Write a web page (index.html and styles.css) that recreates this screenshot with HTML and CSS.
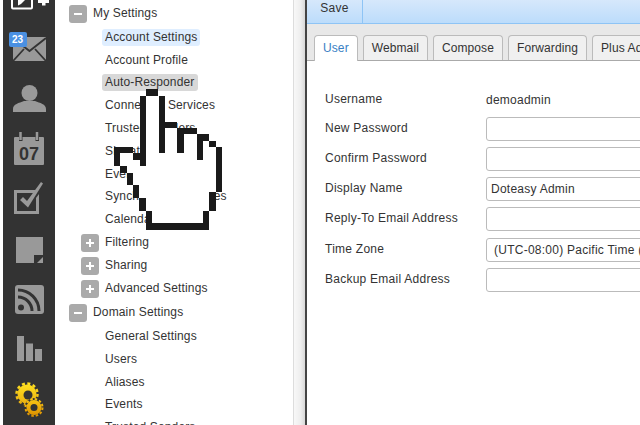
FILE: index.html
```html
<!DOCTYPE html>
<html lang="en">
<head>
<meta charset="utf-8">
<title>Settings</title>
<link rel="stylesheet" href="styles.css">
</head>
<body>
<div class="app">
  <nav class="rail">
    <div class="rail-top">
      <svg width="52" height="10" viewBox="0 0 52 10"><path d="M9 0v7.500a1 1 0 0 0 1 1h18a1 1 0 0 0 1-1V0" fill="none" stroke="#fff" stroke-width="2"/><path d="M15 0h7l-4 4-3 1.500z" fill="#fff"/><path d="M35 0h11v3h-3.500v2.500H39V3h-4z" fill="#fff"/></svg>
    </div>
    <div class="rail-item i-mail">
      <svg width="33" height="24" viewBox="0 0 33 24"><rect width="33" height="24" fill="#999"/><path d="M0 1l16.500 13L33 1" fill="none" stroke="#333" stroke-width="1.800"/><path d="M0 24l11-12M33 24L22 12" fill="none" stroke="#333" stroke-width="1.800"/></svg>
      <span class="badge">23</span>
    </div>
    <div class="rail-item i-person">
      <svg width="33" height="27" viewBox="0 0 33 27"><circle cx="16.500" cy="8" r="8" fill="#999"/><path d="M0 27v-3c0-5 6-6 11-8h11c5 2 11 3 11 8v3z" fill="#999"/></svg>
    </div>
    <div class="rail-item i-cal">
      <svg width="30" height="33" viewBox="0 0 30 33"><path d="M1 5h4v4h3.500V5h13v4H25V5h4a1 1 0 0 1 1 1v26a1 1 0 0 1-1 1H1a1 1 0 0 1-1-1V6a1 1 0 0 1 1-1z" fill="#999"/><path d="M6.500 0v8M23 0v8" fill="none" stroke="#999" stroke-width="2.500"/><text x="15" y="28" text-anchor="middle" class="cal">07</text></svg>
    </div>
    <div class="rail-item i-check">
      <svg width="30" height="32" viewBox="0 0 30 32"><path d="M0 8h22v3H3v18h19V16l3-4v20H0z" fill="#999"/><path d="M6 18l3-3 4 4L27 0l2 1.500-15 24z" fill="#999"/></svg>
    </div>
    <div class="rail-item i-note">
      <svg width="27" height="26" viewBox="0 0 27 26"><path d="M0 0h27v18h-9v8H0z" fill="#999"/><path d="M27 20v6h-6z" fill="#999"/></svg>
    </div>
    <div class="rail-item i-rss">
      <svg width="29" height="29" viewBox="0 0 29 29"><rect width="29" height="29" rx="3" fill="#999"/><circle cx="6" cy="22.500" r="3" fill="#333"/><path d="M3 12a14 14 0 0 1 14 14" fill="none" stroke="#333" stroke-width="3"/><path d="M3 5a21 21 0 0 1 21 21" fill="none" stroke="#333" stroke-width="3"/></svg>
    </div>
    <div class="rail-item i-bars">
      <svg width="25" height="25" viewBox="0 0 25 25"><path d="M0 0h7v25H0zM9 7.500h7V25H9zM18 13h7v12h-7z" fill="#999"/></svg>
    </div>
    <div class="rail-item">
      <svg width="30" height="36" viewBox="0 0 30 36"><defs><linearGradient id="ga" x1="0" y1="0" x2="0" y2="1"><stop offset="0" stop-color="#ffdf20"/><stop offset="1" stop-color="#eab010"/></linearGradient><linearGradient id="gb" x1="0" y1="0" x2="0" y2="1"><stop offset="0" stop-color="#f8c414"/><stop offset="1" stop-color="#dd9200"/></linearGradient></defs><circle cx="13" cy="12" r="9.500" fill="url(#ga)"/><circle cx="13" cy="12" r="10.500" fill="none" stroke="url(#ga)" stroke-width="2.500" stroke-dasharray="3 2.500"/><circle cx="14" cy="13" r="4.500" fill="#333"/><circle cx="20" cy="25.500" r="9.500" fill="#333"/><circle cx="20" cy="25.500" r="7.500" fill="url(#gb)"/><circle cx="20" cy="25.500" r="8.500" fill="none" stroke="url(#gb)" stroke-width="2" stroke-dasharray="2.500 2"/><circle cx="20" cy="25.500" r="3.500" fill="#333"/></svg>
    </div>
  </nav>
  <aside class="tree">
    <div class="node top"><span class="tog minus"></span><span class="lab">My Settings</span></div>
    <div class="leaf"><span class="lab sel">Account Settings</span></div>
    <div class="leaf"><span class="lab">Account Profile</span></div>
    <div class="leaf"><span class="lab hov">Auto-Responder</span></div>
    <div class="leaf"><span class="lab">Connected Services</span></div>
    <div class="leaf"><span class="lab">Trusted Senders</span></div>
    <div class="leaf"><span class="lab">Signatures</span></div>
    <div class="leaf"><span class="lab">Events</span></div>
    <div class="leaf"><span class="lab">Synchronized Devices</span></div>
    <div class="leaf"><span class="lab">Calendars</span></div>
    <div class="node sub"><span class="tog plus"></span><span class="lab">Filtering</span></div>
    <div class="node sub"><span class="tog plus"></span><span class="lab">Sharing</span></div>
    <div class="node sub"><span class="tog plus"></span><span class="lab">Advanced Settings</span></div>
    <div class="node top"><span class="tog minus"></span><span class="lab">Domain Settings</span></div>
    <div class="leaf"><span class="lab">General Settings</span></div>
    <div class="leaf"><span class="lab">Users</span></div>
    <div class="leaf"><span class="lab">Aliases</span></div>
    <div class="leaf"><span class="lab">Events</span></div>
    <div class="leaf"><span class="lab">Trusted Senders</span></div>
  </aside>
  <div class="gutter"></div>
  <main class="panel">
    <div class="toolbar"><button class="save">Save</button></div>
    <div class="tabs">
      <span class="tab active">User</span>
      <span class="tab">Webmail</span>
      <span class="tab">Compose</span>
      <span class="tab">Forwarding</span>
      <span class="tab">Plus Addressing</span>
    </div>
    <div class="form">
      <div class="row static"><label>Username</label><span class="val">demoadmin</span></div>
      <div class="row"><label>New Password</label><span class="input"></span></div>
      <div class="row"><label>Confirm Password</label><span class="input"></span></div>
      <div class="row"><label>Display Name</label><span class="input">Doteasy Admin</span></div>
      <div class="row"><label>Reply-To Email Address</label><span class="input"></span></div>
      <div class="row tz"><label>Time Zone</label><span class="input select">(UTC-08:00) Pacific Time (US &amp; Canada)</span></div>
      <div class="row"><label>Backup Email Address</label><span class="input"></span></div>
    </div>
  </main>
</div>
<svg class="hand" width="110" height="143" viewBox="114 89 110 143" shape-rendering="crispEdges">
  <path d="M146 89h12v7h7v26h12v6h20v6h12v7h7v6h6v45h-6v19h-7v19h-63v-19h-7v-13h-6v-13h-6v-12h-7v-7h-6v-19h19v7h7V96h6z" fill="#fff"/>
  <path d="M146 89h12v7h-12zM140 96h6v70h-6zM159 96h6v57h-6zM165 122h12v6h-12zM177 128h7v25h-7zM184 128h13v6h-13zM197 134h6v26h-6zM203 134h6v7h-6zM209 141h7v6h-7zM216 147h6v45h-6zM209 192h7v19h-7zM203 211h6v12h-6zM146 223h63v7h-63zM146 211h6v12h-6zM139 198h7v13h-7zM133 185h6v13h-6zM127 173h6v12h-6zM120 166h7v7h-7zM114 147h6v19h-6zM120 147h13v6h-13zM133 153h7v7h-7z" fill="#1a1a1a"/>
</svg>
</body>
</html>
```
FILE: styles.css
```css
* { box-sizing: border-box; }
html, body { margin: 0; height: 100%; overflow: hidden; background: #fff; }
body { font-family: "Liberation Sans", Arial, sans-serif; font-size: 12px; color: #333; position: relative; }
.app { display: flex; height: 425px; width: 640px; overflow: hidden; padding-left: 3px; }
.rail { width: 52px; flex: none; background: #333; display: flex; flex-direction: column; align-items: center; }
.rail-top { height: 10px; width: 52px; margin-bottom: 27px; }
.rail-top svg { display: block; }
.rail-item { position: relative; display: flex; justify-content: center; align-items: flex-start; height: 46px; flex: none; }
.rail-item svg { display: block; }
.i-mail { height: 48px; }
.i-person { height: 47px; }
.i-cal { height: 50px; }
.i-check { height: 55px; }
.i-note { height: 48px; }
.i-rss { height: 51px; }
.i-bars { height: 46px; }
.badge { position: absolute; left: -4px; top: -5px; width: 18px; height: 15px; background: #4a90e2; color: #fff; font-size: 10px; font-weight: bold; border-radius: 2px; line-height: 15px; text-align: center; }
.cal { font: bold 18px "Liberation Sans", sans-serif; fill: #333; }
.tree { width: 238px; flex: none; padding-top: 1px; color: #333; }
.node, .leaf { display: flex; align-items: center; height: 23px; }
.leaf { padding-left: 47px; height: 22.800px; }
.node.top { padding-left: 14px; height: 25px; }
.node.sub { padding-left: 26px; }
.tog { position: relative; width: 18px; height: 18px; border-radius: 3px; background: #aaa; margin-right: 3px; flex: none; }
.tog::before { content: ""; position: absolute; left: 5px; top: 8px; width: 8px; height: 2px; background: #fff; }
.plus::after { content: ""; position: absolute; left: 8px; top: 5px; width: 2px; height: 8px; background: #fff; }
.lab { padding: 1px 3px; border-radius: 3px; letter-spacing: .15px; line-height: 15px; }
.sel { background: #dfeeff; }
.hov { background: #d8d8d8; }
.gutter { width: 12px; flex: none; background: linear-gradient(90deg, #f8f8f8, #eee 60%, #d8d8d8); border-left: 1px solid #ddd; }
.panel { flex: 1; min-width: 0; border-left: 2px solid #444; background: #fff; }
.toolbar { height: 24px; background: linear-gradient(#d6e8fb, #bcdcfb); border-bottom: 1px solid #8ec4f5; }
.save { display: block; height: 23px; width: 56px; padding: 0 0 7px; border: 0; border-right: 1px solid #8ec4f5; background: transparent; color: #333; font: 12px "Liberation Sans", sans-serif; letter-spacing: .3px; }
.tabs { height: 37px; background: #e8e8e8; border-bottom: 1px solid #aaa; display: flex; align-items: flex-end; padding-left: 7px; gap: 5px; white-space: nowrap; }
.tab { height: 25px; padding: 0 8px; background: #f0f0f0; border: 1px solid #bbb; border-bottom: 0; border-radius: 4px 4px 0 0; line-height: 25px; letter-spacing: .1px; flex: none; }
.tab.active { background: #fff; color: #3a7fc4; height: 26px; margin-bottom: -1px; }
.form { padding: 27px 0 0 18px; }
.row { display: flex; align-items: center; height: 30px; white-space: nowrap; }
.row.static { height: 24px; margin-bottom: 2px; }
.row.tz { height: 31px; }
.row label { width: 161px; flex: none; letter-spacing: .25px; padding-bottom: 2px; }
.val { letter-spacing: .25px; }
.input { display: block; width: 200px; height: 24px; border: 1px solid #bbb; border-radius: 3px; line-height: 23px; padding-left: 4px; background: #fff; flex: none; letter-spacing: .25px; }
.select { padding-left: 7px; overflow: hidden; }
.hand { position: absolute; left: 114px; top: 89px; }
```
